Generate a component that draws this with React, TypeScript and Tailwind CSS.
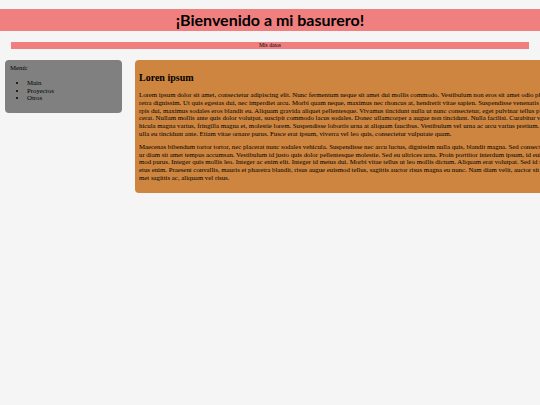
const serif = "font-['Liberation_Serif',serif]";

const p1 =
	"Lorem ipsum dolor sit amet, consectetur adipiscing elit. Nunc fermentum neque sit amet dui mollis commodo. Vestibulum non eros sit amet odio pharetra dignissim. Ut quis egestas dui, nec imperdiet arcu. Morbi quam neque, maximus nec rhoncus at, hendrerit vitae sapien. Suspendisse venenatis turpis dui, maximus sodales eros blandit eu. Aliquam gravida aliquet pellentesque. Vivamus tincidunt nulla ut nunc consectetur, eget pulvinar tellus placerat. Nullam mollis ante quis dolor volutpat, suscipit commodo lacus sodales. Donec ullamcorper a augue non tincidunt. Nulla facilisi. Curabitur vehicula magna varius, fringilla magna et, molestie lorem. Suspendisse lobortis urna at aliquam faucibus. Vestibulum vel urna ac arcu varius pretium. Nulla eu tincidunt ante. Etiam vitae ornare purus. Fusce erat ipsum, viverra vel leo quis, consectetur vulputate quam.";

const p2 =
	"Maecenas bibendum tortor tortor, nec placerat nunc sodales vehicula. Suspendisse nec arcu luctus, dignissim nulla quis, blandit magna. Sed consectetur diam sit amet tempus accumsan. Vestibulum id justo quis dolor pellentesque molestie. Sed eu ultrices urna. Proin porttitor interdum ipsum, id euismod purus. Integer quis mollis leo. Integer ac enim elit. Integer id metus dui. Morbi vitae tellus ut leo mollis dictum. Aliquam erat volutpat. Sed id metus enim. Praesent convallis, mauris et pharetra blandit, risus augue euismod tellus, sagittis auctor risus magna eu nunc. Nam diam velit, auctor sit amet sagittis ac, aliquam vel risus.";

const App = () => {
	return (
		<div className={`min-h-[405px] overflow-hidden bg-[#f5f5f5] pt-[9px] text-black ${serif}`}>
			{/* HEADER */}
			<header className="flex h-[22px] items-center justify-center bg-[#f08080]">
				<h1 className="font-['Lato',sans-serif] text-[16px] font-bold leading-none">
					¡Bienvenido a mi basurero!
				</h1>
			</header>

			{/* NAV */}
			<nav className="mx-[11px] mt-[11px] flex h-[7px] items-center justify-center bg-[#f08080] text-[5.6px] leading-none">
				Mis datos
			</nav>

			<div className="mt-[11px] flex items-start gap-[13px] pl-[5px]">
				{/* SIDEBAR */}
				<aside className="h-[53px] w-[117px] shrink-0 rounded-[4px] bg-[#808080] pl-[5px] pt-[4px] text-[6.8px] leading-[7.8px]">
					<p>Menú:</p>
					<ul className="mt-[7px] list-disc pl-[17px]">
						<li>Main</li>
						<li>Proyectos</li>
						<li>Otros</li>
					</ul>
				</aside>

				{/* ARTICLE */}
				<article className="w-[415px] shrink-0 rounded-[4px] bg-[#cd853f] px-[4px] pb-[11px] pt-[13px]">
					<h2 className="text-[10px] font-bold leading-[10px]">Loren ipsum</h2>
					<p className="mt-[8px] break-all text-[6.8px] leading-[7.8px]">{p1}</p>
					<p className="mt-[5px] break-all text-[6.8px] leading-[7.8px]">{p2}</p>
				</article>
			</div>
		</div>
	);
};

export default App;
